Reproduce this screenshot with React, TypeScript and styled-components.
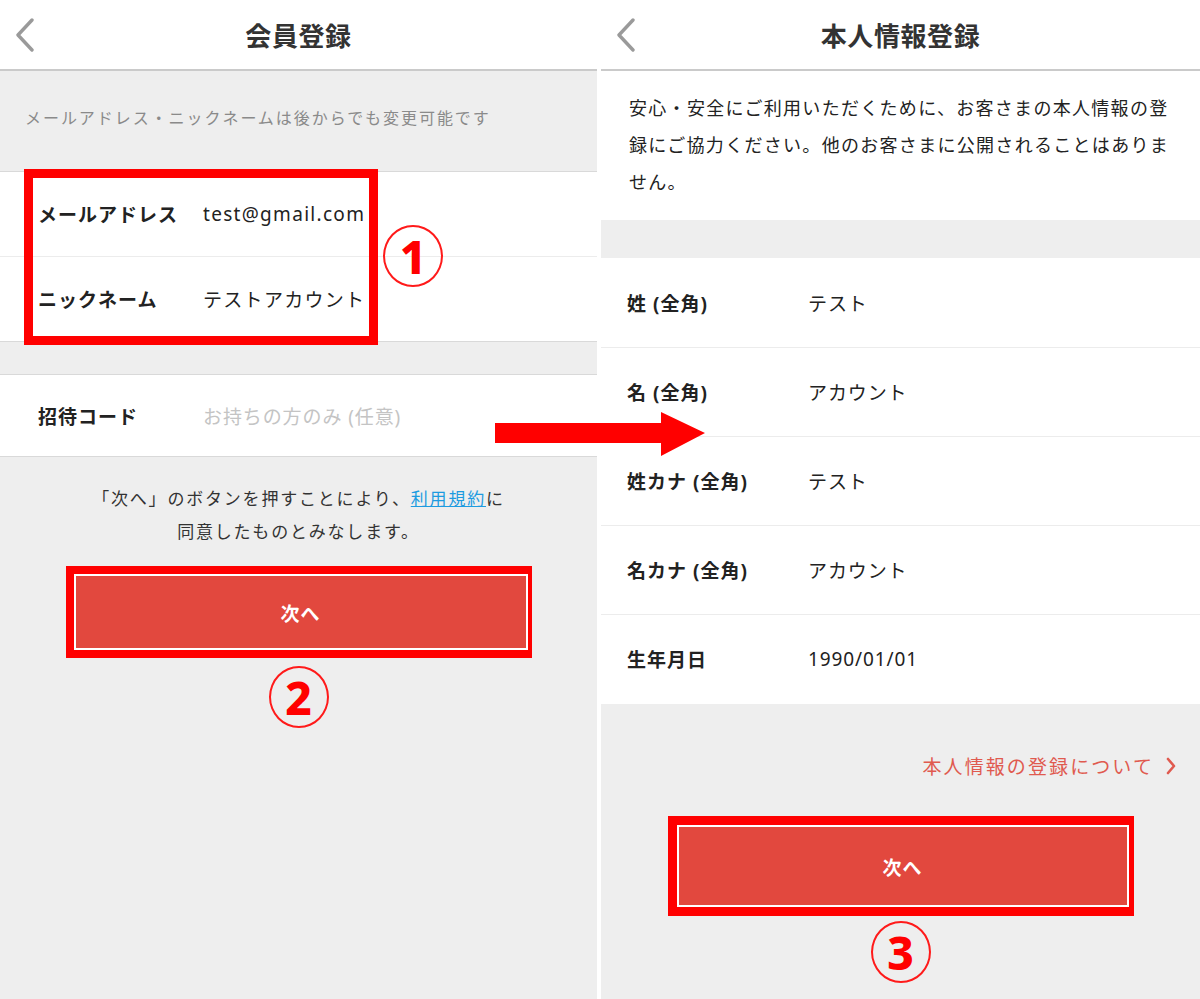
import React from "react"
import styled, { createGlobalStyle } from "styled-components"

const GlobalStyle = createGlobalStyle`
  html, body {
    margin: 0;
    padding: 0;
    background: #fff;
  }
  body {
    font-family: "Noto Sans", "Noto Sans CJK JP", sans-serif;
    color: #222;
  }
`

const Page = styled.div`
  position: relative;
  display: flex;
  gap: 4px;
  width: 1200px;
  height: 999px;
  background: #fff;
  overflow: hidden;
`

const Screen = styled.section<{ $w: number }>`
  width: ${(p) => p.$w}px;
  display: flex;
  flex-direction: column;
  background: #eeeeee;
`

const Header = styled.header`
  height: 69px;
  flex-shrink: 0;
  display: grid;
  grid-template-columns: 70px 1fr 70px;
  align-items: center;
  background: #fff;
  border-bottom: 2px solid #cacaca;
`

const BackButton = styled.button`
  display: flex;
  align-items: center;
  padding: 0 0 0 14px;
  border: none;
  background: none;
  height: 40px;
`

const Title = styled.h1`
  margin: 0;
  text-align: center;
  font-size: 26px;
  letter-spacing: 0.6px;
  font-weight: 700;
  color: #333;
`

const Caption = styled.p`
  margin: 0;
  height: 100px;
  display: flex;
  align-items: center;
  padding: 0 0 8px 25px;
  box-sizing: border-box;
  font-family: "Noto Sans CJK JP", sans-serif;
  font-size: 16px;
  letter-spacing: 1.95px;
  color: #8a8a8a;
`

const Intro = styled.p`
  margin: 0;
  padding: 18px 24px 20px 28px;
  background: #fff;
  font-family: "Noto Sans CJK JP", sans-serif;
  font-size: 18px;
  letter-spacing: 1.3px;
  line-height: 37px;
  color: #222;
`

const Band = styled.div<{ $h: number }>`
  height: ${(p) => p.$h}px;
  flex-shrink: 0;
`

const Group = styled.div<{ $line: string }>`
  position: relative;
  background: #fff;
  border-top: 1px solid ${(p) => p.$line};
  border-bottom: 1px solid ${(p) => p.$line};
`

const Row = styled.div<{ $h: number; $label: number; $pad: number; $line: string }>`
  height: ${(p) => p.$h}px;
  display: grid;
  grid-template-columns: ${(p) => p.$label}px 1fr;
  align-items: center;
  padding-left: ${(p) => p.$pad}px;
  & + & {
    border-top: 1px solid ${(p) => p.$line};
  }
`

const Label = styled.span`
  font-size: 19px;
  font-weight: 700;
  letter-spacing: 1px;
  color: #222;
`

const Value = styled.span<{ $muted?: boolean; $wide?: boolean }>`
  font-size: 19px;
  letter-spacing: ${(p) => (p.$wide ? 1.3 : 0.9)}px;
  color: ${(p) => (p.$muted ? "#c4c4c4" : "#222")};
`

const Terms = styled.p`
  margin: 24px 0 19px;
  text-align: center;
  font-family: "Noto Sans CJK JP", sans-serif;
  font-size: 17px;
  letter-spacing: 1.8px;
  line-height: 33px;
  color: #333;

  a {
    color: #1d9be0;
    text-decoration: underline;
  }
`

const InfoLink = styled.a`
  align-self: flex-end;
  display: flex;
  align-items: center;
  gap: 12px;
  margin: 47px 24px 35px 0;
  font-family: "Noto Sans CJK JP", sans-serif;
  font-size: 19px;
  letter-spacing: 2.1px;
  line-height: 30px;
  color: #e05a4f;
`

const Highlight = styled.div<{ $border: number }>`
  width: 466px;
  box-sizing: border-box;
  margin: 0 auto;
  border: ${(p) => p.$border}px solid #ff0000;
`

const NextButton = styled.button<{ $h: number }>`
  display: block;
  width: 100%;
  height: ${(p) => p.$h}px;
  box-sizing: content-box;
  padding: 0;
  margin: 0;
  border: 2px solid #fff;
  background: #e2483e;
  color: #fff;
  font-family: "Noto Sans CJK JP", sans-serif;
  font-size: 19px;
  font-weight: 700;
  letter-spacing: 1px;
`

const Frame = styled.div`
  position: absolute;
  left: 24px;
  top: -3px;
  width: 354px;
  height: 176px;
  box-sizing: border-box;
  border: 9px solid #ff0000;
  pointer-events: none;
`

const Step = styled.div<{ $mt?: number }>`
  width: 56px;
  height: 58px;
  margin: ${(p) => p.$mt ?? 0}px auto 0;
  border: 2.5px solid #ff1a1a;
  border-radius: 50%;
  display: flex;
  align-items: center;
  justify-content: center;
  color: #ff0000;
  font-family: "Noto Sans", sans-serif;
  font-size: 46px;
  font-weight: 800;
  line-height: 1;
`

const FloatStep = styled(Step)`
  position: absolute;
  left: 383px;
  top: 53px;
  margin: 0;
`

const Arrow = styled.svg`
  position: absolute;
  left: 495px;
  top: 410px;
`

const Chevron = ({ color = "#9a9a9a" }: { color?: string }) => (
  <svg width="22" height="34" viewBox="0 0 22 34">
    <path d="M18 2 L4 17 L18 32" fill="none" stroke={color} strokeWidth="3.4" strokeLinecap="round" strokeLinejoin="round" />
  </svg>
)

const LEFT_LINE = "#d9d9d9"
const RIGHT_LINE = "#ececec"

const personal = [
  ["姓 (全角)", "テスト"],
  ["名 (全角)", "アカウント"],
  ["姓カナ (全角)", "テスト"],
  ["名カナ (全角)", "アカウント"],
  ["生年月日", "1990/01/01"],
]

export default function App() {
  return (
    <Page>
      <GlobalStyle />
      <Screen $w={597}>
        <Header>
          <BackButton>
            <Chevron />
          </BackButton>
          <Title>会員登録</Title>
          <span />
        </Header>
        <Caption>メールアドレス・ニックネームは後からでも変更可能です</Caption>
        <Group $line={LEFT_LINE}>
          <Row $h={84} $label={165} $pad={38} $line={LEFT_LINE}>
            <Label>メールアドレス</Label>
            <Value $wide>test@gmail.com</Value>
          </Row>
          <Row $h={84} $label={165} $pad={38} $line={LEFT_LINE}>
            <Label>ニックネーム</Label>
            <Value $wide>テストアカウント</Value>
          </Row>
          <Frame />
          <FloatStep>1</FloatStep>
        </Group>
        <Band $h={32} />
        <Group $line={LEFT_LINE}>
          <Row $h={81} $label={165} $pad={38} $line={LEFT_LINE}>
            <Label>招待コード</Label>
            <Value $muted>お持ちの方のみ (任意)</Value>
          </Row>
        </Group>
        <Terms>
          「次へ」のボタンを押すことにより、<a>利用規約</a>に
          <br />
          同意したものとみなします。
        </Terms>
        <Highlight $border={8}>
          <NextButton $h={72}>次へ</NextButton>
        </Highlight>
        <Step $mt={8}>2</Step>
      </Screen>

      <Screen $w={599}>
        <Header>
          <BackButton>
            <Chevron />
          </BackButton>
          <Title>本人情報登録</Title>
          <span />
        </Header>
        <Intro>
          安心・安全にご利用いただくために、お客さまの本人情報の登録にご協力ください。他のお客さまに公開されることはありません。
        </Intro>
        <Band $h={38} />
        <Group $line="#fff">
          {personal.map(([label, value]) => (
            <Row key={label} $h={88} $label={181} $pad={26} $line={RIGHT_LINE}>
              <Label>{label}</Label>
              <Value>{value}</Value>
            </Row>
          ))}
        </Group>
        <InfoLink>
          本人情報の登録について
          <svg width="10" height="18" viewBox="0 0 10 18">
            <path d="M2 2 L8 9 L2 16" fill="none" stroke="#e05a4f" strokeWidth="2.6" strokeLinecap="round" strokeLinejoin="round" />
          </svg>
        </InfoLink>
        <Highlight $border={9}>
          <NextButton $h={78}>次へ</NextButton>
        </Highlight>
        <Step $mt={5}>3</Step>
      </Screen>

      <Arrow width="212" height="48" viewBox="0 0 212 48">
        <polygon points="0,13 166,13 166,2 210,23 166,46 166,33 0,33" fill="#ff0000" />
      </Arrow>
    </Page>
  )
}
